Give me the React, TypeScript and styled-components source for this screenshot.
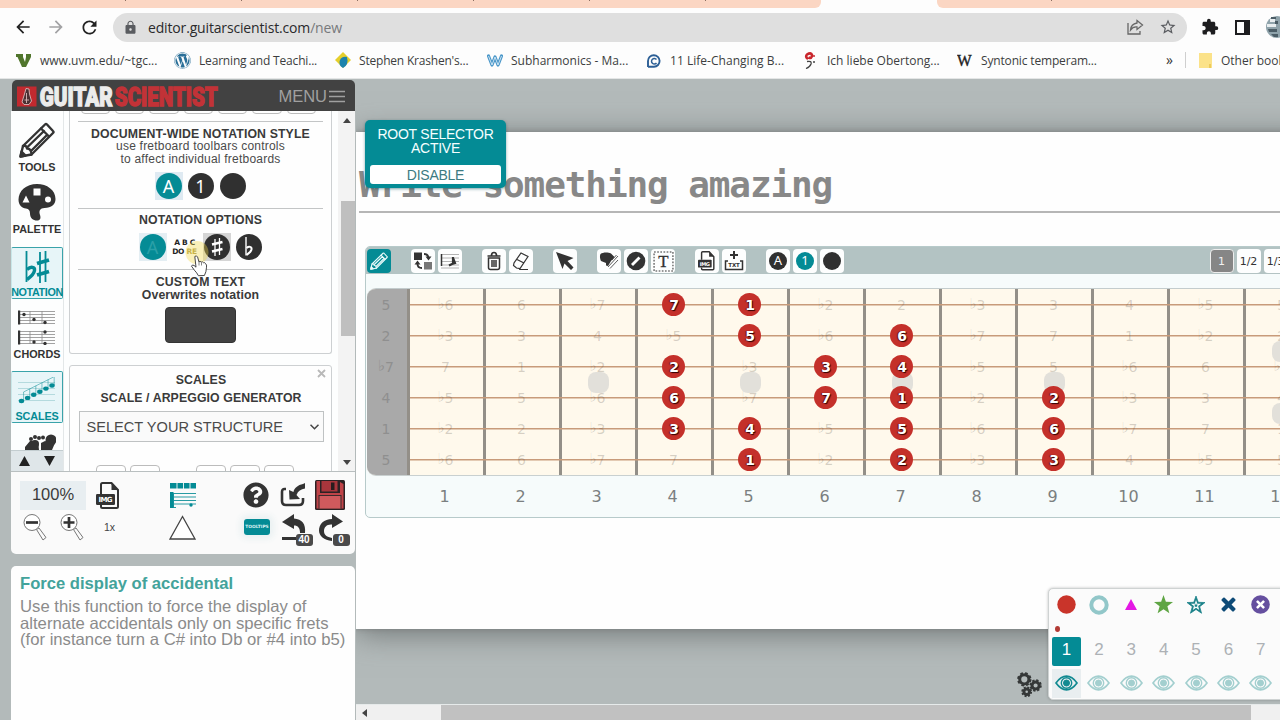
import React from "react";
import styled, { createGlobalStyle, css } from "styled-components";
import { MdArrowBack, MdArrowForward, MdExtension, MdLock, MdRefresh, MdStarBorder } from "react-icons/md";
import { FaQuestionCircle, FaWordpress } from "react-icons/fa";

const teal = "#048b95";
const ink = "#333333";

const Global = createGlobalStyle`
  * { box-sizing: border-box; }
  body { margin: 0; background: #b3baba; font-family: "Liberation Sans", Arial, sans-serif; color: ${ink}; overflow: hidden; }
  svg { display: block; flex: none; }
`;

const Page = styled.div`
  display: flex; flex-direction: column; width: 1280px; height: 720px; overflow: hidden;
`;

/* ---------- browser chrome ---------- */

const TabStrip = styled.div`
  display: flex; height: 8px; background: #fdfdfd; flex: none;
`;
const TabGroup = styled.div<{ $w: number; $side: "left" | "right" }>`
  width: ${p => p.$w}px; height: 8px; background: #fbd6c3; display: flex;
  border-radius: ${p => (p.$side === "left" ? "0 0 6px 0" : "0 0 0 6px")};
  margin-left: ${p => (p.$side === "right" ? "116px" : "0")};
  padding-left: ${p => (p.$side === "right" ? "114px" : "125px")};
  gap: 115px;
`;
const TabMark = styled.i`width: 1px; height: 1px; background: #8a6f62;`;

const AddressRow = styled.div`
  display: flex; align-items: center; height: 38px; background: #fdfdfd; padding-left: 13px; flex: none; color: #222;
`;
const NavButtons = styled.div`display: flex; gap: 13px; width: 100px; flex: none;`;
const UrlPill = styled.div`
  display: flex; align-items: center; width: 1074px; flex: none; height: 29px; border-radius: 15px; background: #dfdfdf;
  padding: 0 10px 0 10px; color: #5a5c60;
`;
const Url = styled.div`
  flex: 1; margin-left: 10px; font: 14px "Open Sans", "Noto Sans", sans-serif; letter-spacing: -0.16px; color: #2a2a2c;
  span { color: #77797c; }
`;
const PillIcons = styled.div`display: flex; gap: 15px; align-items: center;`;
const Extensions = styled.div`display: flex; align-items: center; gap: 16px; margin-left: 14px; color: #1d1d1f; flex: none;`;

const BookmarkRow = styled.div`
  display: flex; align-items: center; height: 33px; padding: 0 0 4px 16px; background: #fdfdfd; flex: none;
  border-bottom: 1px solid #e4e6e6;
`;
const Bookmark = styled.div<{ $w: number; $ls?: number }>`
  width: ${p => p.$w}px; flex: none; display: flex; align-items: center; gap: 8px; white-space: nowrap;
  font: 12px "Open Sans", "Noto Sans", sans-serif; letter-spacing: ${p => p.$ls ?? 0}px; color: #3c3d40;
  padding-top: 1px;
`;
const More = styled.div`
  width: 31px; flex: none; margin-left: 16px; padding: 0 0 2px 12px; font: 14px "Open Sans", sans-serif; color: #333;
`;
const Divider = styled.div`width: 1px; flex: none; height: 16px; background: #cfcfcf; margin-right: 13px;`;

/* ---------- workspace ---------- */

const Workspace = styled.div`display: flex; flex: 1; min-height: 0; padding-left: 11px; background: #b3baba;`;
const Sidebar = styled.aside`
  width: 344px; flex: none; display: flex; flex-direction: column; margin-right: 1px; padding-top: 1px;
`;
const Brand = styled.header`
  height: 31px; flex: none; background: #424242; border-radius: 5px 5px 0 0; margin-left: 1px;
  display: flex; align-items: center; justify-content: space-between; padding: 1px 10px 0 5px;
`;
const MenuButton = styled.div`
  display: flex; align-items: center; gap: 2px; color: #a0a0a0; font-size: 16.5px;
`;
const ToolArea = styled.div`display: flex; height: 360px; flex: none; background: #fdfefe; overflow: hidden;`;
const NavColumn = styled.nav`width: 53px; display: flex; flex-direction: column; border-right: 1px solid #e3e7e8;`;
const NavList = styled.div`
  height: 339px; padding-top: 11px; overflow: hidden; display: flex; flex-direction: column; gap: 10.25px;
`;
const NavItem = styled.div<{ $on?: boolean; $ls?: number }>`
  height: 52px; width: 52px; flex: none; display: flex; flex-direction: column; align-items: center; justify-content: space-between;
  font: bold 10.8px/12px "Liberation Sans", Arial, sans-serif; letter-spacing: ${p => p.$ls ?? 0}px; white-space: nowrap; color: ${ink};
  padding-bottom: 1px;
  ${p => p.$on && css`color: ${teal}; background: #e7f5f8; border: 1px solid #39a3aa; border-left-color: #c9e7e9; border-radius: 2px; padding-bottom: 0;`}
`;
const NavScroll = styled.div`
  height: 21px; background: #dfe6e9; border-top: 1px solid #c3cdd0; display: flex; align-items: center; justify-content: center; gap: 14px;
`;
const Panels = styled.div`width: 274px; padding-left: 5px; overflow: hidden;`;
const Card = styled.section<{ $top?: boolean }>`
  position: relative; width: 263px; border: 1px solid #cdd0d2; background: #fefefe; text-align: center;
  display: flex; flex-direction: column; align-items: center;
  ${p => (p.$top
    ? css`height: 243px; border-top: 0; border-radius: 0 0 3px 3px; margin-bottom: 11px;`
    : css`height: 140px; border-radius: 3px; padding: 8px 0 0 1px;`)}
`;
const KeyRow = styled.div<{ $open?: boolean }>`
  display: flex; width: 245px; flex: none; overflow: hidden;
  ${p => (p.$open
    ? css`height: 12px; margin-top: 23px; gap: 4px; padding-left: 17px;`
    : css`height: 3px; align-items: flex-end; padding-left: 2.5px; gap: 5px;`)}
`;
const Key = styled.div<{ $gap?: boolean }>`
  width: 30px; height: 24px; flex: none; border: 1px solid #bcbcbc; border-radius: 4px; background: #fff;
  margin-left: ${p => (p.$gap ? "32px" : "0")};
`;
const SmallKey = styled(Key)`width: 29.4px;`;
const Section = styled.div<{ $h: number; $mt?: number }>`
  width: 245px; height: ${p => p.$h}px; flex: none; border-top: 1px solid #c3c5c6; display: flex; flex-direction: column; align-items: center;
  margin-top: ${p => p.$mt ?? 0}px;
`;
const Heading = styled.div<{ $mt?: number; $ls?: number; $lh?: number }>`
  font: bold 12.3px/${p => p.$lh ?? 13}px "Liberation Sans", Arial, sans-serif; margin-top: ${p => p.$mt ?? 0}px;
  letter-spacing: ${p => p.$ls ?? 0.12}px; white-space: nowrap; color: #3a3a3a;
`;
const Note = styled.div`font-size: 12px; line-height: 12.6px; margin-top: -0.8px; letter-spacing: 0.22px; color: #4a4a4a;`;
const RoundRow = styled.div<{ $mt: number }>`display: flex; margin-top: ${p => p.$mt}px; gap: 4px; align-items: center;`;
const RoundHolder = styled.div<{ $bg?: string }>`
  width: 28px; height: 28px; display: grid; place-items: center; background: ${p => p.$bg ?? "transparent"};
`;
const Round = styled.div<{ $c: string; $s?: number; $f?: number; $ink?: string }>`
  width: ${p => p.$s ?? 26}px; height: ${p => p.$s ?? 26}px; border-radius: 50%; background: ${p => p.$c}; color: ${p => p.$ink ?? "#fff"};
  display: grid; place-items: center; font: ${p => p.$f ?? 18}px/1 "Noto Sans", "Open Sans", sans-serif; padding-bottom: 1px;
`;
const Syllables = styled.div`
  font: bold 7.5px/9px "DejaVu Sans", sans-serif; width: 28px; text-align: center; color: #222; white-space: nowrap; display: flex;
  flex-direction: column; align-items: center; letter-spacing: -0.3px;
  em { font-style: normal; color: #ac9a4a; }
`;
const CustomBox = styled.div`
  width: 71px; height: 36px; margin-top: 6px; background: #424242; border: 1px solid #343434; border-radius: 4px;
`;
const SelectBox = styled.div`
  width: 245px; height: 31px; flex: none; margin-top: 6px; border: 1px solid #bfc2c3; background: #fafafa; display: flex; align-items: center;
  justify-content: space-between; padding: 0 4px 0 7px; font-size: 14.6px; color: #4a4a4a; white-space: nowrap;
`;
const Close = styled.div`position: absolute; right: 5px; top: 2px;`;
const VScroll = styled.div`
  width: 17px; background: #f3f3f3; display: flex; flex-direction: column; align-items: center; padding: 7px 0 6px;
`;
const VThumb = styled.div`width: 14px; height: 135px; background: #bfbfbf; margin: 78px 0 auto 2px;`;

const Footer = styled.div`
  height: 83px; flex: none; background: #fafafa; border-top: 1px solid #b9bfc0; border-radius: 0 0 5px 5px; padding: 8.5px 8px 0 9px;
  display: flex; flex-direction: column;
`;
const FooterRow = styled.div<{ $h: number }>`display: flex; align-items: center; height: ${p => p.$h}px;`;
const Slot = styled.div<{ $w: number; $indent?: number }>`
  width: ${p => p.$w}px; flex: none; display: flex; align-items: center; position: relative; padding-left: ${p => p.$indent ?? 0}px;
`;
const Percent = styled.div`
  width: 66px; height: 29px; background: #e8eef1; font-size: 16.5px; display: grid; place-items: center; padding-bottom: 2px; color: #3b3b3b;
`;
const TooltipButton = styled.div`
  width: 26px; height: 16px; border-radius: 3px; background: ${teal}; color: #d9f1f2; display: grid; place-items: center;
  font: bold 4.4px/1 "DejaVu Sans", sans-serif; box-shadow: 0 0 6px 4px #eaf1f2;
`;
const Badge = styled.div`
  position: absolute; left: 13.5px; top: 20px; width: 17px; height: 12px; border-radius: 3px; background: #4a4a4a; color: #fff;
  font: bold 10px/12px "Liberation Sans", sans-serif; text-align: center;
`;
const SpeedLabel = styled.div`font-size: 10.5px; color: #444;`;

const Info = styled.div`
  margin-top: 12px; flex: 1; background: #fefefe; border-radius: 5px 5px 0 0; padding: 9px 0 0 9px; white-space: nowrap;
`;
const InfoTitle = styled.div`font: bold 16.6px/18px "Liberation Sans", Arial, sans-serif; color: #43a39b; margin-bottom: 6px;`;
const InfoText = styled.div`font-size: 16.68px; line-height: 16.7px; color: #8b8b8b;`;

/* ---------- document ---------- */

const Main = styled.main`
  position: relative; flex: 1; min-width: 0; display: flex; flex-direction: column; background: #b3baba; overflow: hidden;
`;
const Canvas = styled.div`height: 625px; flex: none; padding-top: 53px; overflow: hidden;`;
const Paper = styled.div`height: 497px; width: 1400px; background: #fefefe; box-shadow: 0 0 5px #7d8282, 0 4px 30px #6f7474;`;
const Title = styled.div`
  margin-left: 3px; padding-top: 33px; height: 81px; border-bottom: 2px solid #b6b6b6;
  font: bold 36px/40px "DejaVu Sans Mono", monospace; letter-spacing: -1.1px; color: #888; white-space: pre;
`;
const Fretboard = styled.section`
  margin: 33px 0 0 9px; height: 272px; border: 1px solid #b7caca; border-radius: 5px; background: #f6fbfb; overflow: hidden;
`;
const Toolbar = styled.div`
  height: 27px; background: #b3c3c3; display: flex; align-items: center; gap: 20px; padding-left: 1px; padding-top: 1px;
`;
const Group = styled.div<{ $ml?: number }>`display: flex; gap: 3px; margin-left: ${p => p.$ml ?? 0}px;`;
const Tool = styled.div<{ $bg?: string; $c?: string; $edge?: string }>`
  width: 24px; height: 24px; border-radius: 4px; background: ${p => p.$bg ?? "#fdfefe"}; color: ${p => p.$c ?? ink};
  border: ${p => (p.$edge ? `1px solid ${p.$edge}` : "0")};
  display: grid; place-items: center; font: 11px/1 "DejaVu Sans", sans-serif; white-space: nowrap;
`;
const Board = styled.div`
  margin: 14px 0 0 1px; height: 188px; border-top: 1px solid #c3cccd; border-bottom: 1px solid #c9d0d0; display: flex; background: #fff9ec;
  border-radius: 9px 0 0 9px; overflow: hidden;
`;
const FretColumn = styled.div<{ $open?: boolean }>`
  position: relative; flex: none; display: flex; flex-direction: column; border-right: 3px solid #938f88;
  width: ${p => (p.$open ? 43 : 76)}px; background: ${p => (p.$open ? "#a9a9a9" : "#fff9ec")};
`;
const Cell = styled.div<{ $open?: boolean }>`
  flex: 1; position: relative; display: flex; align-items: center; justify-content: center; padding-right: 2px;
  font: 14px/1 "DejaVu Sans", sans-serif; color: ${p => (p.$open ? "#8f8f8f" : "rgba(70,60,50,0.22)")};
  ${p => !p.$open && css`
    background: linear-gradient(#c89b7a, #c89b7a) 0 50% / 100% 1.5px no-repeat;
    margin-right: -3px; padding-right: 5px;
  `}
  small { font-size: 15px; }
`;
const NoteDot = styled.div`
  width: 23px; height: 23px; border-radius: 50%; background: #c4302a; color: #fff; display: grid; place-items: center;
  font: bold 14px/1 "DejaVu Sans", sans-serif; text-shadow: 1px 1px 1px #300, -1px 0 1px #611; padding-left: 1px;
`;
const Inlay = styled.div<{ $y: number }>`
  position: absolute; width: 21px; height: 21px; border-radius: 8px; background: #e2e0da; left: 26px; top: ${p => p.$y}px;
`;
const Numbers = styled.div`display: flex; padding-left: 42px; height: 41px; align-items: center;`;
const FretNumber = styled.div`
  width: 76px; flex: none; text-align: center; font: 16px/1 "DejaVu Sans", sans-serif; color: #7b7f80; padding: 1px 3px 0 0;
`;

const RootSelector = styled.div`
  position: absolute; left: 9px; top: 41px; width: 141px; height: 68px; border-radius: 5px; background: ${teal}; color: #f4ffff;
  font-size: 14px; letter-spacing: -0.25px; line-height: 14px; text-align: center; padding: 7px 5px 0; box-shadow: 0 1px 3px rgba(0,80,90,0.5);
`;
const Disable = styled.div`
  height: 19px; margin-top: 10px; border-radius: 3px; background: #fff; color: #3d7b82; line-height: 20px;
`;

const Gears = styled.div`position: absolute; left: 660px; top: 592px;`;
const Layers = styled.div`
  position: absolute; left: 692px; top: 509px; width: 260px; height: 112px; border-radius: 5px; background: #fbfbfb; border: 1px solid #cfd3d3;
  box-shadow: 0 0 3px rgba(0,0,0,0.25); padding: 1px 0 0 3px; display: flex;
`;
const Layer = styled.div`width: 32.4px; flex: none; display: flex; flex-direction: column; align-items: flex-start;`;
const Mark = styled.div`width: 29px; height: 29px; display: grid; place-items: center;`;
const Dot = styled.div<{ $on?: boolean }>`
  width: 5px; height: 6px; border-radius: 50%; margin: 7px 0 5px 3px; background: ${p => (p.$on ? "#b23a35" : "transparent")};
`;
const Num = styled.div<{ $on?: boolean }>`
  width: 29px; height: 29px; border-radius: 2px; display: grid; place-items: center; font-size: 17px; padding-bottom: 3px;
  background: ${p => (p.$on ? teal : "transparent")}; color: ${p => (p.$on ? "#fff" : "#adb1b5")};
`;
const EyeBox = styled.div<{ $on?: boolean }>`
  width: 29px; height: 29px; margin-top: 3px; display: grid; place-items: center; background: ${p => (p.$on ? "#e9eef0" : "transparent")};
  color: ${p => (p.$on ? "#128a91" : "#a3cfcf")}; padding-bottom: 1px;
`;
const HScroll = styled.div`
  height: 16px; background: #f0f0f0; border-top: 1px solid #e6eaea; display: flex; align-items: center; padding-left: 6px; flex: none;
`;
const HThumb = styled.div`width: 810px; height: 15px; background: #c1c1c1; margin-left: 74px;`;

const HandLayer = styled.div`position: absolute; left: 115px; top: 129px; width: 26px; height: 38px;`;
const ChordStack = styled.div`display: flex; flex-direction: column; gap: 5px; padding-top: 1px;`;

/* ---------- icons ---------- */

const ArrowTri = ({ d, w = 8, h = 5, c = "#444" }: { d: "up" | "down" | "left"; w?: number; h?: number; c?: string }) => (
  <svg width={w} height={h} viewBox="0 0 10 10" preserveAspectRatio="none">
    <path fill={c} d={d === "up" ? "M5 0 10 10H0z" : d === "down" ? "M0 0H10L5 10z" : "M10 0V10L0 5z"} />
  </svg>
);

const Pencil = ({ s = 36, c = ink, w = 2.4 }) => (
  <svg width={s} height={s} viewBox="0 0 36 36" fill="none" stroke={c} strokeWidth={w} strokeLinejoin="round" strokeLinecap="round">
    <path d="M1.5 34.5 4 24 26 2.5q1-1 2 0L34 9q1 1 0 2L12.5 32.5z" />
    <path d="M4 24q3.5-1 4 2.5 4.5 0 4.500 6M22 6.500 30 14.500M8 25.500 25 9M12.500 28.500 28 13" />
    <path d="M1.500 34.500l1-5 4 4z" fill={c} />
  </svg>
);

const Palette = () => (
  <svg width="38" height="37" viewBox="0 0 38 37">
    <path fill={ink} d="M19 0C8 0 .5 7 .5 15.500 .5 21 4 24 8 24.500q4 .5 4 5C12 34 15 36.500 19 36.500c3.500 0 4-2.500 3-5.500-1.500-4 0-7 4.500-7 7 0 11-3.500 11-9C37.500 6 29 0 19 0z" />
    <rect x="15.500" y="4.500" width="7" height="7" fill="#fff" />
    <path d="M8 11.500 11.500 18.500H4.500z" fill="#fff" />
    <circle cx="30" cy="15.500" r="3" fill="#fff" />
  </svg>
);

const FlatSharp = () => (
  <svg width="25" height="37" viewBox="0 0 25 37" fill="none" stroke={teal}>
    <path strokeWidth="1.800" d="M1.500 3v31M15 4v31M20.500 3v31" />
    <path strokeWidth="3.400" d="M2 21.500c4-3.500 8-2.500 7.500 1-.5 3.500-4 6.500-7.500 9" />
    <path strokeWidth="3.800" d="M12 15.500 24 12M12 27 24 23.500" />
  </svg>
);

const ChordGrid = ({ dots }: { dots: number[][] }) => (
  <svg width="38" height="15" viewBox="0 0 38 15">
    <path stroke="#8a8a8a" strokeWidth=".8" fill="none" d="M2 1.500H37M2 4.500H37M2 7.500H37M2 10.500H37M2 13.500H37M12 1v13M24 1v13" />
    <rect x="0" y="0.500" width="2.200" height="14" fill={ink} />
    {dots.map(([x, y], i) => <circle key={i} cx={x} cy={y} r="1.700" fill={ink} />)}
  </svg>
);
const Chords = () => (
  <ChordStack>
    <ChordGrid dots={[[6, 4.5], [16, 9.5], [27, 12.5]]} />
    <ChordGrid dots={[[27, 2], [16, 12], [27, 13.4]]} />
  </ChordStack>
);

const ScaleNotes = () => (
  <svg width="38" height="30" viewBox="0 0 38 30">
    <path stroke="#b4dade" fill="none" d="M0 5.500H37M0 11.500H37M0 17.500H37M0 23.500H37" />
    {[0, 1, 2, 3, 4, 5].map(i => (
      <g key={i} fill={teal}>
        <ellipse cx={3.5 + i * 6.1} cy={24 - i * 3.1} rx="2.700" ry="2.200" />
        <rect x={5.2 + i * 6.1} y={15 - i * 3.1} width=".9" height="9" opacity=".55" />
      </g>
    ))}
    <path stroke={teal} strokeWidth=".9" opacity=".55" d="M5.500 15 35.500 0" fill="none" />
  </svg>
);

const HandsNotes = () => (
  <svg width="38" height="34" viewBox="0 0 38 34" fill={ink}>
    <circle cx="17" cy="4" r="2" /><circle cx="21" cy="5" r="2" /><circle cx="13" cy="6" r="2" /><circle cx="17" cy="11" r="4" />
    <circle cx="25" cy="4.500" r="2" /><circle cx="33" cy="7" r="5.500" /><path d="M7 14 12 8h8l1 9H7zM23 10l4-2 10 2-3 7H23z" />
  </svg>
);

const FileImg = ({ s = 1, label = "IMG" }) => (
  <svg width={24 * s} height={27 * s} viewBox="0 0 24 27">
    <path d="M5 12V2.500A1.500 1.500 0 0 1 6.500 1H15.500L22 8V24.500A1.500 1.500 0 0 1 20.500 26H6.500A1.500 1.500 0 0 1 5 24.500V23" fill="none" stroke={ink} strokeWidth="2" />
    <path d="M15.500 1V8H22z" fill={ink} />
    <rect x="0" y="12" width="19" height="11" rx="1.200" fill={ink} />
    <text x="9.500" y="20.200" textAnchor="middle" fontFamily="DejaVu Sans" fontWeight="bold" fontSize="7" fill="#fff" textLength="14">{label}</text>
  </svg>
);

const TableIcon = () => (
  <svg width="26" height="27" viewBox="0 0 26 27" fill={teal}>
    <path d="M0 1h26v5.500H0z" /><path stroke="#fafafa" strokeWidth=".9" d="M7 0v7M13.500 0v7M20 0v7" />
    <path d="M0 10h3.500v16H0z" /><path stroke={teal} strokeWidth="1" opacity=".85" d="M0 11.500H26M0 15H26M0 18.500H26M0 22H26M0 25.500H6M3.500 11v14" />
    <circle cx="21" cy="23" r="1.700" />
  </svg>
);

const Magnifier = ({ plus }: { plus?: boolean }) => (
  <svg width="24" height="28" viewBox="0 0 24 28" fill="none">
    <path d="M13.500 16.500 16 15 23 24.500 20 27z" stroke="#777" />
    <circle cx="9" cy="9.500" r="8" stroke="#777" fill="#fff" />
    <path d={plus ? "M3.500 9.500h11M9 4v11" : "M3 9.500h12"} stroke={ink} strokeWidth="2.700" />
  </svg>
);

const Import = () => (
  <svg width="26" height="24" viewBox="0 0 26 24" fill="none">
    <path d="M6 6H4.500Q2 6 2 9v9q0 4 4 4h13q4 0 4-4V15" stroke={ink} strokeWidth="2.600" />
    <path d="M25 0 23 1C18 2 14 5 13.500 9L9 7 9.500 16.500 20 16 16.500 12C18 8 21 6 25 5.500z" fill={ink} />
  </svg>
);

const Floppy = () => (
  <svg width="30" height="30" viewBox="0 0 30 30">
    <rect width="30" height="30" rx="1.500" fill="#2c2224" />
    <path d="M1.500 1H5V13H25V2L28.500 4V28.500H1.500z" fill="#c04348" />
    <rect x="6.500" y="1" width="16" height="10.500" fill="#a8363c" /><rect x="16" y="2.500" width="3.500" height="7.500" fill="#281c1e" />
    <rect x="3.500" y="15" width="23" height="13.500" fill="#3a2a2c" /><rect x="4.500" y="16" width="21" height="12.500" fill="#d05a5d" />
  </svg>
);

const Undo = ({ flip }: { flip?: boolean }) => (
  <svg width="25" height="27" viewBox="0 0 25 27">
    {flip
      ? <path fill={ink} d="M13 0 24 7.500 13 14V10.500C8 10 5 13 5 17s3 6 8 7v3C5 26 0 22 0 16.500 0 10 5 5 13 5z" />
      : <path fill={ink} d="M12 0 0 8 12 15V11.500C16 11.500 18 14 18 19h5C24 10 20 5 12 4.500zM0 23h14v3H0z" />}
  </svg>
);

const Eye = () => (
  <svg width="23" height="16" viewBox="0 0 23 16" fill="none" stroke="currentColor">
    <path strokeWidth="1.700" d="M1 8Q6 1.200 11.500 1.200T22 8Q17 14.800 11.500 14.800T1 8z" />
    <circle cx="11.500" cy="8" r="5.200" strokeWidth="1.400" /><circle cx="11.500" cy="8" r="3" fill="currentColor" />
  </svg>
);

const star = "M12 0 15 8.400 24 8.700 16.900 14.200 19.400 23 12 17.900 4.600 23 7.100 14.200 0 8.700 9 8.400z";
const cross = "M5 1 10 6 15 1Q16 0 17 1L19 3Q20 4 19 5L14 10 19 15Q20 16 19 17L17 19Q16 20 15 19L10 14 5 19Q4 20 3 19L1 17Q0 16 1 15L6 10 1 5Q0 4 1 3L3 1Q4 0 5 1z";
const marks = [
  <svg width="19" height="19" viewBox="0 0 19 19"><circle cx="9.500" cy="9.500" r="9.200" fill="#c9342a" /></svg>,
  <svg width="20" height="20" viewBox="0 0 20 20"><circle cx="10" cy="10" r="7.700" fill="none" stroke="#92c7c9" strokeWidth="4" /></svg>,
  <svg width="12" height="11" viewBox="0 0 12 11"><path d="M6 0 12 11H0z" fill="#e418e4" /></svg>,
  <svg width="19" height="19" viewBox="0 0 24 24"><path d={star} fill="#5fa544" /></svg>,
  <svg width="18" height="18" viewBox="0 0 24 24">
    <path d={star} fill="#1b8289" stroke="#1b8289" strokeWidth="1" />
    <path d={star} fill="#fff" transform="translate(5.200 5.400) scale(.57)" />
    <path d={star} fill="#1b8289" transform="translate(9 9.400) scale(.25)" />
  </svg>,
  <svg width="15" height="15" viewBox="0 0 20 20"><path d={cross} fill="#0d4a77" /></svg>,
  <svg width="19" height="19" viewBox="0 0 19 19"><circle cx="9.500" cy="9.500" r="9.300" fill="#654f9f" /><g transform="translate(5 5) scale(.45)"><path d={cross} fill="#fff" /></g></svg>,
];

const Gear = ({ x, y, r }: { x: number; y: number; r: number }) => {
  const c = 2 * Math.PI * (r + 1.6);
  return (
    <g fill="none" stroke="#353838">
      <circle cx={x} cy={y} r={r} strokeWidth="3" />
      <circle cx={x} cy={y} r={r + 1.6} strokeWidth="2" strokeDasharray={`${(c / 8) * 0.56} ${(c / 8) * 0.44}`} />
    </g>
  );
};

const LogoMark = () => (
  <svg width="202" height="21" viewBox="0 0 202 21">
    <rect x="0" y="0.500" width="19.500" height="20" fill="#c2292f" />
    <path d="M9 2.500 12 3 12.500 8 14.500 15 12 18.500H7L5 16 7.500 8z" fill="#4b3033" stroke="#d9b9ba" strokeWidth=".9" />
    <path d="M9.500 7V17M7.500 14H12" stroke="#d9b9ba" strokeWidth=".9" />
    <g fontFamily="Roboto, 'Open Sans', sans-serif" fontWeight="900" fontSize="25.500" strokeWidth="1.300">
      <text x="22.700" y="19.600" textLength="73" lengthAdjust="spacingAndGlyphs" fill="#ececec" stroke="#ececec">GUITAR</text>
      <text x="97.800" y="19.600" textLength="103" lengthAdjust="spacingAndGlyphs" fill="#c23237" stroke="#c23237">SCIENTIST</text>
    </g>
  </svg>
);

const Sharp = () => (
  <svg width="12" height="20" viewBox="0 0 12 20" stroke="#fff" fill="none">
    <path strokeWidth="1.300" d="M4 2v17M8.500 1v17" /><path strokeWidth="2.400" d="M1 7.500 11.500 5M1 14.500 11.500 12" />
  </svg>
);
const Flat = () => (
  <svg width="10" height="20" viewBox="0 0 10 20" stroke="#fff" fill="none">
    <path strokeWidth="1.400" d="M2 0v18.500" /><path strokeWidth="2" d="M2.500 11c2.500-2 5.500-1.500 5 1.500-.5 2.500-3 4-5 5.500" />
  </svg>
);

const ToolSvg = ({ children, s = 20 }: { children: React.ReactNode; s?: number }) => (
  <svg width={s} height={s} viewBox="0 0 20 20" fill="none" stroke={ink}>{children}</svg>
);

const toolGroups: React.ReactNode[][] = [
  [
    <ToolSvg>
      <rect x="1" y="1.500" width="8" height="7.500" fill={ink} stroke="none" /><rect x="11" y="11" width="8" height="7.500" fill="#777" stroke="none" />
      <path d="M11 3q4.500 0 4.500 4.500M9 17q-4.500 0-4.500-4" strokeWidth="1.800" />
      <path d="M12.500 5.500h6l-3 4zM1.500 13.500h6l-3-4z" fill={ink} stroke="none" />
    </ToolSvg>,
    <ToolSvg>
      <path d="M1 3.500H19M1 7H19M1 10.500H19M1 14H19M1 17H19" stroke="#aaa" strokeWidth=".9" /><path d="M1.500 3v12" strokeWidth="1.500" />
      <path d="M13 6v6M13 7l2 5-3 1-3 1.500" strokeWidth="2.200" />
    </ToolSvg>,
  ],
  [
    <ToolSvg>
      <path d="M3.500 5h13M7.500 4.500q0-3 2.500-3t2.500 3" strokeWidth="1.700" />
      <path d="M4.500 7h11V16.500a2 2 0 0 1-2 2h-7a2 2 0 0 1-2-2zM8 9v7M10 9v7M12 9v7" strokeWidth="1.500" />
    </ToolSvg>,
    <ToolSvg><path d="M2.500 14.500 3 12 10 2 17 5.500 9 17.500 5.500 17zM6 8.500 13 12M8 18.500H17" strokeWidth="1.200" /></ToolSvg>,
  ],
  [<ToolSvg><path d="M1 1 18.500 7 12.500 10 18.500 16.500 16 19 9.500 12.500 7.500 18z" fill={ink} stroke="none" /></ToolSvg>],
  [
    <ToolSvg>
      <path d="M1.500 3C4 1 9 1 12 2.500L15.500 6 12 10 9 15 7 14.500 7 12 2 10C1 8 .5 5 1.500 3z" fill={ink} stroke="none" />
      <path d="M9 16 19 5M11 17.500 19 9M13 9 17.500 4" strokeWidth=".8" />
    </ToolSvg>,
    <ToolSvg><circle cx="10" cy="10" r="9.300" fill={ink} stroke="none" /><path d="M6 14 13.500 6.500" stroke="#fff" strokeWidth="2.800" /></ToolSvg>,
    <ToolSvg s={21}>
      <rect x="1" y="1" width="18" height="18" strokeDasharray="1.600 1.400" />
      <text x="10" y="15.500" textAnchor="middle" fontFamily="Liberation Serif" fontSize="16" fill={ink} stroke={ink} strokeWidth=".3">T</text>
    </ToolSvg>,
  ],
  [
    <FileImg s={0.72} />,
    <ToolSvg>
      <path d="M10 0v8M6 4h8" strokeWidth="2" /><path d="M4 10H1.500V18.500H18.500V10H16" strokeWidth="1.500" />
      <text x="10" y="16" textAnchor="middle" fontFamily="DejaVu Sans" fontWeight="bold" fontSize="5.500" fill={ink} stroke="none">TXT</text>
    </ToolSvg>,
  ],
  [
    <Round $c="#303030" $s={18} $f={13}>A</Round>,
    <Round $c={teal} $s={18} $f={13}>1</Round>,
    <Round $c="#303030" $s={18} />,
  ],
];

/* ---------- data ---------- */

const bookmarks: { w: number; text: string; ls: number; icon: React.ReactNode }[] = [
  { w: 158, text: "www.uvm.edu/~tgc...", ls: 0, icon: <svg width="16" height="14" viewBox="0 0 16 14"><path d="M0 0H7V3L9 8 10 3V0h5V3L10 13H6L1.500 3H0z" fill="#50752c" /></svg> },
  { w: 161, text: "Learning and Teachi...", ls: -0.18, icon: <FaWordpress size={17} color="#2a6f98" /> },
  { w: 152, text: "Stephen Krashen's...", ls: -0.2, icon: <svg width="16" height="17" viewBox="0 0 16 17"><path d="M8 0 16 8 8 16 0 8z" fill="#e5cf2c" /><path d="M5 8q2-4 7-3 2 8-4 11-5-3-3-8z" fill="#1c83ad" /></svg> },
  { w: 159, text: "Subharmonics - Ma...", ls: 0, icon: <svg width="16" height="13" viewBox="0 0 16 13" fill="none"><path d="M1.500 2 5 11 8 3 11 11 14.500 2" stroke="#4a97c9" strokeWidth="3.200" strokeLinejoin="round" strokeLinecap="round" /><path d="M1.500 2 5 11 8 3 11 11 14.500 2" stroke="#e8f4fb" strokeWidth=".8" /></svg> },
  { w: 157, text: "11 Life-Changing B...", ls: 0.03, icon: <svg width="16" height="14" viewBox="0 0 16 14" fill="none" stroke="#2c5f96"><path d="M2 13V7a5.800 5.800 0 1 1 6 5.800H2" strokeWidth="1.900" /><path d="M10.500 5.500a2.800 2.800 0 1 0 0 3.500" strokeWidth="1.500" /></svg> },
  { w: 154, text: "Ich liebe Obertong...", ls: 0, icon: <svg width="16" height="17" viewBox="0 0 16 17" fill="none"><path d="M5 7q-3-2-1-4.500 4-2.500 5 .5 0 4-3.500 2.500" stroke="#c9262c" strokeWidth="2.600" /><path d="M4 9.500q5-1 4 2.500-1 3-5 4.500" stroke="#444" strokeWidth="1.300" /><circle cx="11" cy="4" r="1" fill="#c9262c" /><circle cx="11" cy="10" r="1" fill="#444" /></svg> },
  { w: 181, text: "Syntonic temperam...", ls: -0.16, icon: <svg width="16" height="14" viewBox="0 0 16 14"><text x="0" y="12" fontFamily="Liberation Serif" fontSize="16" fill="#222" stroke="#222" strokeWidth=".4" textLength="14.500" lengthAdjust="spacingAndGlyphs">W</text></svg> },
];

const strings = [
  "5 b6 6 b7 7* 1* b2 2 b3 3 4 b5 5",
  "2 b3 3 4 b5 5* b6 6* b7 7 1 b2 2",
  "b7 7 1 b2 2* b3 3* 4* b5 5 b6 6 b7",
  "4 b5 5 b6 6* b7 7* 1* b2 2* b3 3 4",
  "1 b2 2 b3 3* 4* b5 5* b6 6* b7 7 1",
  "5 b6 6 b7 7 1* b2 2* b3 3* 4 b5 5",
].map(s => s.split(" "));
const inlays: Record<number, number[]> = { 3: [83], 5: [83], 7: [83], 9: [83], 12: [51.5, 114] };

const Degree = ({ v }: { v: string }) => {
  if (v.endsWith("*")) return <NoteDot>{v[0]}</NoteDot>;
  return v[0] === "b" ? <><small>♭</small>{v[1]}</> : <>{v}</>;
};

/* ---------- app ---------- */

const Chrome = () => (
  <>
    <TabStrip>
      <TabGroup $w={821} $side="left">{[0, 1, 2, 3, 4, 5].map(i => <TabMark key={i} />)}</TabGroup>
      <TabGroup $w={343} $side="right"><TabMark /></TabGroup>
    </TabStrip>
    <AddressRow>
      <NavButtons>
        <MdArrowBack size={20} /><MdArrowForward size={20} color="#a2a2a4" /><MdRefresh size={21} />
      </NavButtons>
      <UrlPill>
        <MdLock size={15} />
        <Url>editor.guitarscientist.com<span>/new</span></Url>
        <PillIcons>
          <svg width="17" height="16" viewBox="0 0 17 16" fill="none" stroke="#666" strokeWidth="1.300"><path d="M1 4v11h12v-3" /><path d="M10 1.500 15.500 6 10 10.500V8Q6 7.500 3.500 11 4 5 10 4z" /></svg>
          <MdStarBorder size={18} />
        </PillIcons>
      </UrlPill>
      <Extensions>
        <MdExtension size={18} />
        <svg width="15" height="15" viewBox="0 0 15 15"><path fill="#1d1d1f" d="M0 0h15v15H0zM2 2v11h7V2z" fillRule="evenodd" /></svg>
        <svg width="22" height="22" viewBox="0 0 22 22"><circle cx="11" cy="11" r="11" fill="#8fa3ab" /><path d="M4 3h5v3H4zM1 8h9v3H1z" fill="#e8eef0" /><path d="M2 13h9v3H3zM5 18h7v3H8zM5 1h5v2H5zM9 5h3v3H9z" fill="#4b5d66" /></svg>
      </Extensions>
    </AddressRow>
    <BookmarkRow>
      {bookmarks.map(b => <Bookmark key={b.text} $w={b.w} $ls={b.ls}>{b.icon}{b.text}</Bookmark>)}
      <More>»</More>
      <Divider />
      <Bookmark $w={110}>
        <svg width="14" height="15" viewBox="0 0 14 15"><path d="M0 0h13v15H0z" fill="#fbe289" /><path d="M10 11h2v4h-2z" fill="#eccb5c" /></svg>
        Other bookmarks
      </Bookmark>
    </BookmarkRow>
  </>
);

const SidePanel = () => (
  <Sidebar>
    <Brand>
      <LogoMark />
      <MenuButton>MENU<svg width="16" height="13" viewBox="0 0 16 13" stroke="#a0a0a0" strokeWidth="1.300"><path d="M0 1.500H16M0 6.500H16M0 11.500H16" /></svg></MenuButton>
    </Brand>
    <ToolArea>
      <NavColumn>
        <NavList>
          <NavItem><Pencil />TOOLS</NavItem>
          <NavItem><Palette />PALETTE</NavItem>
          <NavItem $on $ls={-0.4}><FlatSharp />NOTATION</NavItem>
          <NavItem><Chords />CHORDS</NavItem>
          <NavItem $on $ls={-0.1}><svg width="1" height="2" /><ScaleNotes />SCALES</NavItem>
          <NavItem><HandsNotes /></NavItem>
        </NavList>
        <NavScroll><ArrowTri d="up" w={11} h={10} c="#222" /><ArrowTri d="down" w={11} h={10} c="#222" /></NavScroll>
      </NavColumn>
      <Panels>
        <Card $top>
          <KeyRow>{[0, 1, 2, 3, 4, 5, 6].map(i => <SmallKey key={i} />)}</KeyRow>
          <Section $h={87} $mt={7}>
            <Heading $mt={6}>DOCUMENT-WIDE NOTATION STYLE</Heading>
            <Note>use fretboard toolbars controls<br />to affect individual fretboards</Note>
            <RoundRow $mt={7}>
              <RoundHolder $bg="#dfeaf2"><Round $c={teal}>A</Round></RoundHolder>
              <RoundHolder><Round $c="#303030">1</Round></RoundHolder>
              <RoundHolder><Round $c="#303030" /></RoundHolder>
            </RoundRow>
          </Section>
          <Section $h={61}>
            <Heading $mt={5}>NOTATION OPTIONS</Heading>
            <RoundRow $mt={6}>
              <RoundHolder $bg="#e4eef3"><Round $c={teal} $ink="#2aa0a8">A</Round></RoundHolder>
              <Syllables><span>A B C</span><span>DO <em>RE</em></span></Syllables>
              <RoundHolder $bg="#d5d5d5"><Round $c="#303030"><Sharp /></Round></RoundHolder>
              <RoundHolder><Round $c="#303030"><Flat /></Round></RoundHolder>
            </RoundRow>
          </Section>
          <Section $h={80}>
            <Heading $mt={6} $lh={12.5} $ls={0.15}>CUSTOM TEXT</Heading>
            <Heading $lh={12.5} $ls={0.1}>Overwrites notation</Heading>
            <CustomBox />
          </Section>
          <HandLayer>
            <svg width="26" height="38" viewBox="0 0 26 38">
              <circle cx="12" cy="12.500" r="11.500" fill="#f5d94a" opacity=".38" />
              <path d="M9.800 16.500q1.800-1.600 2.800.6l1.400 4.900q.8-1.600 2.200.1 1.400-.9 2.200.6 1.500-.6 2.200 1 1.400 1 .9 3.500l-.6 4.500-1.500 3.800-6 .2q-1.500-3-4-5.500l-2.900-4q.5-1.800 2.500-.8l2 1.800z" fill="#fff" stroke="#333" strokeWidth=".9" />
              <path d="M14 22v3.500M16.500 22.500v3" stroke="#555" strokeWidth=".7" />
            </svg>
          </HandLayer>
        </Card>
        <Card>
          <Close><svg width="9" height="10" viewBox="0 -1 9 10" stroke="#b9b9b9" strokeWidth="1.800"><path d="M1 1 8 8M8 1 1 8" /></svg></Close>
          <Heading $ls={0.1}>SCALES</Heading>
          <Heading $mt={5} $ls={0.1}>SCALE / ARPEGGIO GENERATOR</Heading>
          <SelectBox>SELECT YOUR STRUCTURE
            <svg width="9" height="6" viewBox="0 0 9 6" fill="none" stroke="#444" strokeWidth="1.500"><path d="M.5.700 4.500 4.700 8.500.700" /></svg>
          </SelectBox>
          <KeyRow $open><Key /><Key /><Key $gap /><Key /><Key /></KeyRow>
        </Card>
      </Panels>
      <VScroll><ArrowTri d="up" /><VThumb /><ArrowTri d="down" /></VScroll>
    </ToolArea>
    <Footer>
      <FooterRow $h={29}>
        <Slot $w={76}><Percent>100%</Percent></Slot>
        <Slot $w={74}><FileImg /></Slot>
        <Slot $w={73}><TableIcon /></Slot>
        <Slot $w={37}><FaQuestionCircle size={26} color={ink} /></Slot>
        <Slot $w={35}><Import /></Slot>
        <Floppy />
      </FooterRow>
      <FooterRow $h={35}>
        <Slot $w={37} $indent={3}><Magnifier /></Slot>
        <Slot $w={47} $indent={3}><Magnifier plus /></Slot>
        <Slot $w={65}><SpeedLabel>1x</SpeedLabel></Slot>
        <Slot $w={75}><svg width="27" height="25" viewBox="0 0 27 25"><path d="M13.500 1.500 26 24H1z" fill="#fff" stroke="#444" strokeWidth="1.300" /></svg></Slot>
        <Slot $w={38}><TooltipButton>TOOLTIPS</TooltipButton></Slot>
        <Slot $w={37}><Undo /><Badge>40</Badge></Slot>
        <Slot $w={30}><Undo flip /><Badge>0</Badge></Slot>
      </FooterRow>
    </Footer>
    <Info>
      <InfoTitle>Force display of accidental</InfoTitle>
      <InfoText>Use this function to force the display of<br />alternate accidentals only on specific frets<br />(for instance turn a C# into Db or #4 into b5)</InfoText>
    </Info>
  </Sidebar>
);

const Document = () => (
  <Main>
    <Canvas>
      <Paper>
        <Title>Write something amazing</Title>
        <Fretboard>
          <Toolbar>
            <Group><Tool $bg={teal}><Pencil s={18} c="#eafafa" w={2.2} /></Tool></Group>
            {toolGroups.map((g, i) => <Group key={i}>{g.map((t, j) => <Tool key={j}>{t}</Tool>)}</Group>)}
            <Group $ml={345.5}>
              <Tool $bg="#868686" $c="#f2f2f2" $edge="#eee">1</Tool><Tool>1/2</Tool><Tool>1/3</Tool>
            </Group>
          </Toolbar>
          <Board>
            {strings[0].map((_, f) => (
              <FretColumn key={f} $open={f === 0}>
                {(inlays[f] ?? []).map(y => <Inlay key={y} $y={y} />)}
                {strings.map((s, i) => <Cell key={i} $open={f === 0}><Degree v={s[f]} /></Cell>)}
              </FretColumn>
            ))}
          </Board>
          <Numbers>{[1, 2, 3, 4, 5, 6, 7, 8, 9, 10, 11, 12].map(n => <FretNumber key={n}>{n}</FretNumber>)}</Numbers>
        </Fretboard>
      </Paper>
    </Canvas>
    <RootSelector>ROOT SELECTOR<br />ACTIVE<Disable>DISABLE</Disable></RootSelector>
    <Gears>
      <svg width="27" height="28" viewBox="0 0 27 28"><Gear x={8.3} y={8.3} r={4.6} /><Gear x={19.6} y={14.5} r={3.6} /><Gear x={10.7} y={20.8} r={2.8} /></svg>
    </Gears>
    <Layers>
      {marks.map((m, i) => (
        <Layer key={i}>
          <Mark>{m}</Mark>
          <Dot $on={i === 0} />
          <Num $on={i === 0}>{i + 1}</Num>
          <EyeBox $on={i === 0}><Eye /></EyeBox>
        </Layer>
      ))}
    </Layers>
    <HScroll><ArrowTri d="left" w={5} h={8} /><HThumb /></HScroll>
  </Main>
);

export default function App() {
  return (
    <Page>
      <Global />
      <Chrome />
      <Workspace>
        <SidePanel />
        <Document />
      </Workspace>
    </Page>
  );
}
